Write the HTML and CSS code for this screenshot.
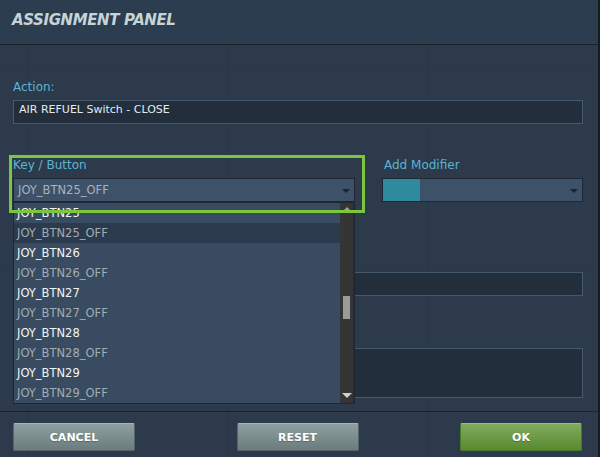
FILE: index.html
```html
<!DOCTYPE html>
<html>
<head>
<meta charset="utf-8">
<link rel="stylesheet" href="styles.css">
</head>
<body>
<div class="panel">
  <header class="head"><h1 class="title">ASSIGNMENT PANEL</h1></header>
  <main class="content">
    <div class="field action">
      <div class="label">Action:</div>
      <div class="input">AIR REFUEL Switch - CLOSE</div>
    </div>
    <div class="row">
      <div class="keycol">
        <div class="label">Key / Button</div>
        <div class="select">
          <span class="value">JOY_BTN25_OFF</span>
          <span class="arrow"></span>
        </div>
        <div class="list">
          <ul class="items">
            <li class="item on">JOY_BTN25</li>
            <li class="item off hover">JOY_BTN25_OFF</li>
            <li class="item on">JOY_BTN26</li>
            <li class="item off">JOY_BTN26_OFF</li>
            <li class="item on">JOY_BTN27</li>
            <li class="item off">JOY_BTN27_OFF</li>
            <li class="item on">JOY_BTN28</li>
            <li class="item off">JOY_BTN28_OFF</li>
            <li class="item on">JOY_BTN29</li>
            <li class="item off">JOY_BTN29_OFF</li>
          </ul>
          <div class="scrollbar">
            <span class="sb-up"></span>
            <span class="sb-thumb"></span>
            <span class="sb-down"></span>
          </div>
        </div>
        <div class="focus"></div>
      </div>
      <div class="modcol">
        <div class="label">Add Modifier</div>
        <div class="select mod">
          <span class="teal"></span>
          <span class="arrow"></span>
        </div>
      </div>
    </div>
    <div class="field f3">
      <div class="input"></div>
    </div>
    <div class="field f4">
      <div class="input tall"></div>
    </div>
  </main>
  <footer class="foot">
    <button class="btn grey">CANCEL</button>
    <button class="btn grey">RESET</button>
    <button class="btn green">OK</button>
  </footer>
</div>
</body>
</html>
```
FILE: styles.css
```css
* { box-sizing: border-box; }
html, body {
  margin: 0;
  padding: 0;
  background: #161c24;
  width: 600px;
  height: 457px;
  overflow: hidden;
  font-family: "DejaVu Sans", Verdana, sans-serif;
}
.panel {
  width: 598px;
  height: 457px;
  display: flex;
  flex-direction: column;
  background-color: #2c3a4b;
  background-image:
    linear-gradient(90deg, rgba(0,0,0,0.07) 1px, transparent 1px),
    linear-gradient(0deg, rgba(0,0,0,0.05) 1px, transparent 1px);
  background-size: 200px 200px, 200px 200px;
  background-position: 28px 0, 0 69px;
}
.head {
  height: 45px;
  flex: none;
  background: #2d3d50;
  border-bottom: 1px solid #18212b;
  padding: 11px 0 0 12px;
}
.title {
  margin: 0;
  font-size: 15px;
  line-height: 18px;
  font-weight: bold;
  font-style: italic;
  letter-spacing: -0.4px;
  color: #c4d5d8;
}
.content {
  height: 366px;
  flex: none;
  padding: 35px 15px 0 13px;
}
.label {
  font-size: 12px;
  line-height: 14px;
  color: #5bb4d4;
  margin-bottom: 6px;
  white-space: nowrap;
}
.input {
  height: 24px;
  background: #232e3c;
  border: 1px solid #45596f;
  padding: 0 5px;
  font-size: 11px;
  line-height: 18px;
  color: #e6eaee;
}
.input.tall { height: 50px; }
.row {
  display: flex;
  gap: 27px;
  margin-top: 34px;
}
.keycol {
  position: relative;
  width: 342px;
  flex: none;
}
.modcol {
  flex: 1;
}
.modcol .label { padding-left: 2px; }
.select {
  position: relative;
  height: 24px;
  background: #3d5169;
  border: 1px solid #1d2834;
  padding: 0 4px;
  font-size: 11.5px;
  line-height: 22px;
  color: #a9b2bb;
  display: flex;
}
.select .arrow {
  position: absolute;
  right: 4px;
  top: 10px;
  width: 0;
  height: 0;
  border-left: 4px solid transparent;
  border-right: 4px solid transparent;
  border-top: 4px solid #1c232b;
}
.select.mod { padding: 0; }
.teal {
  width: 37px;
  height: 22px;
  background: #2e8a9d;
}
.list {
  position: absolute;
  left: 0;
  top: 44px;
  width: 342px;
  height: 202px;
  border: 1px solid #1d2834;
  background: #394c61;
  display: flex;
  z-index: 2;
}
.items {
  list-style: none;
  margin: 0;
  padding: 0;
  flex: 1;
}
.item {
  height: 20px;
  line-height: 20px;
  font-size: 11.5px;
  padding-left: 3px;
  background: #384b60;
}
.item.on { color: #f2f4f6; }
.item.off { color: #a2abb4; }
.item.hover { background: #2b3b4d; }
.scrollbar {
  position: relative;
  width: 14px;
  flex: none;
  background: #353535;
  border-right: 1px solid #2a2a2a;
}
.sb-up, .sb-down {
  position: absolute;
  left: 2px;
  width: 0;
  height: 0;
  border-left: 5px solid transparent;
  border-right: 5px solid transparent;
}
.sb-up {
  top: 4px;
  border-bottom: 5px solid #a0a0a0;
}
.sb-down {
  bottom: 5px;
  border-top: 5px solid #d0d0d0;
}
.sb-thumb {
  position: absolute;
  left: 3px;
  top: 93px;
  width: 7px;
  height: 23px;
  background: #9a9a9a;
}
.focus {
  position: absolute;
  left: -4px;
  top: -3px;
  width: 356px;
  height: 58px;
  border: 3px solid #7cc63e;
  z-index: 3;
  pointer-events: none;
}
.f3 { margin-top: 70px; }
.f4 { margin-top: 52px; }
.foot {
  flex: 1;
  border-top: 1px solid #1a232d;
  display: flex;
  justify-content: space-between;
  align-items: flex-start;
  padding: 11px 16px 0 13px;
}
.btn {
  width: 122px;
  height: 28px;
  border-radius: 2px;
  font-family: "DejaVu Sans", Verdana, sans-serif;
  font-weight: bold;
  font-size: 11px;
  color: #ffffff;
  padding: 0;
  text-shadow: 0 1px 1px rgba(0,0,0,0.25);
}
.btn.grey {
  background: linear-gradient(#8e9f9f, #6b7c7e);
  border: 1px solid #56666a;
  border-top-color: #a6b4b4;
}
.btn.green {
  background: linear-gradient(#82ab5e, #578a2f);
  border: 1px solid #4a7a28;
  border-top-color: #9cc07a;
}
```
